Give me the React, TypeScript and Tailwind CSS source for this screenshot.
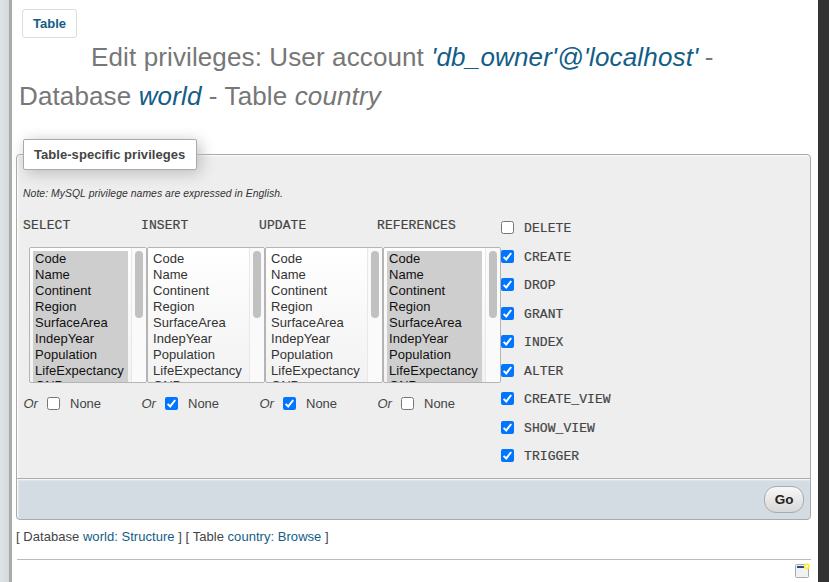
const COLUMNS = ["Code", "Name", "Continent", "Region", "SurfaceArea", "IndepYear", "Population", "LifeExpectancy", "GNP"];

const LISTS = [
  { name: "SELECT", selected: true, none: false },
  { name: "INSERT", selected: false, none: true },
  { name: "UPDATE", selected: false, none: true },
  { name: "REFERENCES", selected: true, none: false },
];

const GRANTS = ["DELETE", "CREATE", "DROP", "GRANT", "INDEX", "ALTER", "CREATE_VIEW", "SHOW_VIEW", "TRIGGER"];

function Check({ on }: { on: boolean }) {
  return on ? (
    <span className="block h-[13px] w-[13px] shrink-0 rounded-[2px] bg-[#0075ff]">
      <svg viewBox="0 0 13 13" className="block h-[13px] w-[13px]" fill="none" stroke="#fff" strokeWidth="2">
        <path d="M2.6 6.9 5.2 9.4 10.2 3" />
      </svg>
    </span>
  ) : (
    <span className="block h-[13px] w-[13px] shrink-0 rounded-[2.5px] border border-[#767676] bg-white" />
  );
}

function ColumnList({ selected }: { selected: boolean }) {
  return (
    <div className="ml-[6px] flex h-[136px] w-[118px] overflow-hidden rounded-[2px] border border-[#b4b4b4] bg-linear-to-b from-white to-[#f2f2f2] pt-[3px]">
      <div className="w-[101px] shrink-0 pl-[3px]">
        <div className={selected ? "w-[95px] bg-[#cecece] text-[#101010]" : "w-[95px] text-[#333]"}>
          {COLUMNS.map((c) => (
            <div key={c} className="h-4 pl-[2px] text-[13px] leading-4 tracking-[0.05px] whitespace-nowrap last:leading-[14px]">
              {c}
            </div>
          ))}
        </div>
      </div>
      <div className="-mt-[3px] h-[134px] w-[15px] border-l border-[#e8e8e8] bg-[#fafafa] pt-[3px] pl-[3px]">
        <div className="h-[67px] w-2 rounded-full bg-[#c1c1c1]" />
      </div>
    </div>
  );
}

export default function App() {
  return (
    <div className="flex h-[582px] w-[829px] overflow-hidden bg-white font-['Liberation_Sans',Arial,sans-serif] text-[13px] text-[#444]">
      <div className="w-[9px] shrink-0 bg-linear-to-r from-[#e1e4e6] to-[#d3d9dd]" />
      <div className="w-[3px] shrink-0 bg-[#aaa]" />
      <main className="w-[806px] shrink-0 pr-[7px] pl-1">
        <div className="ml-[6px] flex pt-[9px]">
          <a className="h-[29px] w-[55px] rounded-[3px] border border-[#ddd] text-center leading-[27px] font-bold text-[#135d86]">Table</a>
        </div>
        <h2 className="pl-[3px] text-[26px] leading-[39px] whitespace-nowrap text-[#777]">
          <div className="pl-[72px] tracking-[0.12px]">
            Edit privileges: User account <i className="tracking-[0.18px] text-[#135d86]">'db_owner'@'localhost'</i>
            <span className="-ml-[1px]"> -</span>
          </div>
          <div className="tracking-[0.13px]">
            Database <i className="text-[#135d86]">world</i> - Table <i>country</i>
          </div>
        </h2>
        <section className="relative mt-[38px] h-[325px] w-[795px] rounded-t-[4px] border border-[#aaa] bg-[#eee] shadow-[inset_1px_1px_2px_#fff]">
          <div className="absolute -top-[16px] left-[6px] h-[31px] w-[174px] rounded-[2px] border border-[#aaa] bg-white pl-[10px] leading-[29px] font-bold tracking-[0.05px] text-[#444] shadow-[3px_3px_15px_#bbb]">
            Table-specific privileges
          </div>
          <p className="pt-[32px] pl-[6px] text-[10.4px] leading-[14px] tracking-[0.05px] text-[#333] italic">Note: MySQL privilege names are expressed in English.</p>
          <div className="flex pl-[6px]">
            {LISTS.map((l) => (
              <div key={l.name} className="w-[118px] shrink-0">
                <div className="mt-[17px] h-[16px] font-['Liberation_Mono',monospace] text-[13px] leading-4 tracking-[0.08px] [-webkit-text-stroke:0.2px]">{l.name}</div>
                <div className="mt-[13px]">
                  <ColumnList selected={l.selected} />
                </div>
                <div className="mt-[12px] flex h-4 items-center pl-[0.5px]">
                  <i className="w-[23.5px] pt-[2px]">Or</i>
                  <Check on={l.none} />
                  <span className="ml-[10px] pt-[2px]">None</span>
                </div>
              </div>
            ))}
            <div className="mt-[12.3px] ml-[6px]">
              {GRANTS.map((g) => (
                <div key={g} className="flex h-[28.5px] items-center">
                  <Check on={g !== "DELETE"} />
                  <span className="mt-[3px] ml-[10px] font-['Liberation_Mono',monospace] text-[13px] leading-4 tracking-[0.08px] [-webkit-text-stroke:0.2px]">{g}</span>
                </div>
              ))}
            </div>
          </div>
        </section>
        <footer className="-mt-px flex h-[42px] w-[795px] items-center justify-end rounded-b-[4px] border border-[#aaa] bg-[#d3dce3] pr-[6px] shadow-[inset_1px_1px_2px_#fff]">
          <button className="h-[27px] w-10 rounded-[12px] border border-[#aaa] bg-linear-to-b from-[#f8f8f8] to-[#d8d8d8] pt-[2px] text-[13.5px] leading-5 font-bold text-[#222]">Go</button>
        </footer>
        <p className="mt-[9px] h-4 leading-4 tracking-[0.04px] whitespace-nowrap text-[#444]">
          [ Database <a className="text-[#135d86]">world: Structure</a> ] [ Table <a className="text-[#135d86]">country: Browse</a> ]
        </p>
        <div className="mt-[14px] ml-px flex h-[20px] justify-end border-t border-[#bbb] pt-[3px] pr-px">
          <svg width="16" height="16" viewBox="0 0 16 16">
            <rect x="1.5" y="1.5" width="13" height="13" rx="1" fill="#f1f1f1" stroke="#aaa" />
            <rect x="3" y="3" width="8" height="2" fill="#204a87" />
            <circle cx="12.8" cy="3.3" r="2.2" fill="#fff" stroke="#fcee3f" strokeWidth="1.8" />
          </svg>
        </div>
      </main>
      <div className="w-[11px] shrink-0 bg-[#333]" />
    </div>
  );
}
